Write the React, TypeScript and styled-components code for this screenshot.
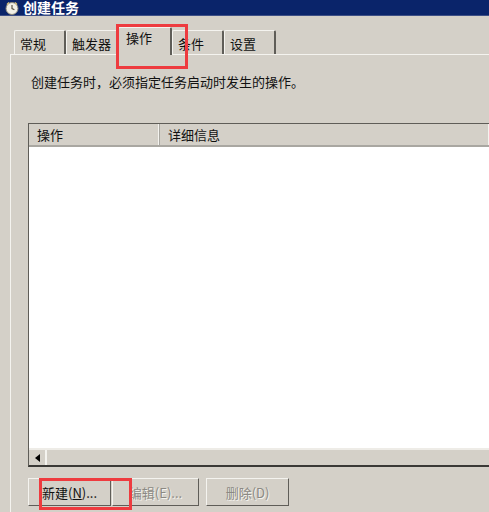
import React from 'react';
import styled, {createGlobalStyle} from 'styled-components';

const Global = createGlobalStyle`
  html, body {
    margin: 0;
    padding: 0;
    width: 489px;
    height: 512px;
    overflow: hidden;
    background: #d4d0c8;
  }
`

const tabs = [
    {label: '常规', width: 52},
    {label: '触发器', width: 52},
    {label: '操作', width: 54, active: true},
    {label: '条件', width: 52},
    {label: '设置', width: 52},
]

export default function App() {
    return (
        <Dialog>
            <Global/>
            <TitleBar>
                <svg width="14" height="14" viewBox="0 0 14 14">
                    <circle cx="7" cy="7.5" r="6" fill="#f1efe6" stroke="#8d8a7c"/>
                    <path d="M7 4v3.6l2.4 1.2" fill="none" stroke="#5a5548" strokeWidth="1.2"/>
                    <path d="M2 3.5 4 1.5M12 3.5 10 1.5" stroke="#d9c27a" strokeWidth="1.4"/>
                </svg>
                <span>创建任务</span>
            </TitleBar>
            <TabStrip>
                {tabs.map(t => (
                    <Tab key={t.label} $width={t.width} $active={t.active}>{t.label}</Tab>
                ))}
            </TabStrip>
            <Panel>
                <Hint>创建任务时，必须指定任务启动时发生的操作。</Hint>
                <ListBox>
                    <ListHeader>
                        <HeaderCell $width={131}>操作</HeaderCell>
                        <HeaderCell $width={330}>详细信息</HeaderCell>
                    </ListHeader>
                    <ListBody/>
                    <ScrollBar>
                        <ScrollButton>
                            <svg width="5" height="8" viewBox="0 0 5 8"><path d="M5 0v8L0 4z" fill="#000"/></svg>
                        </ScrollButton>
                    </ScrollBar>
                </ListBox>
                <ButtonRow>
                    <ActionButton $width={83} $gap={1}>新建(<u>N</u>)...</ActionButton>
                    <ActionButton $width={87} $gap={7} disabled>编辑(E)...</ActionButton>
                    <ActionButton $width={83} disabled>删除(D)</ActionButton>
                </ButtonRow>
            </Panel>
            <Mark $left={116} $top={24} $width={72} $height={45}/>
            <Mark $left={39} $top={478} $width={93} $height={32}/>
        </Dialog>
    )
}

const Dialog = styled.div`
  position: relative;
  width: 489px;
  height: 512px;
  overflow: hidden;
  background: #d4d0c8;
  color: #111;
  font-family: "Noto Sans CJK SC", "Liberation Sans", sans-serif;
  font-size: 13px;
`

const TitleBar = styled.div`
  display: flex;
  align-items: center;
  gap: 4px;
  height: 15px;
  padding-left: 5px;
  background: #0a246a;
  border-bottom: 1px solid #3d4f86;
  color: #fff;
  font-size: 14px;
  font-weight: 700;
  line-height: 15px;
`

const TabStrip = styled.div`
  display: flex;
  align-items: flex-end;
  height: 38px;
  padding-left: 14px;
`

const Tab = styled.div<{$width: number; $active?: boolean}>`
  box-sizing: border-box;
  width: ${p => p.$width}px;
  height: ${p => (p.$active ? 28 : 24)}px;
  padding: ${p => (p.$active ? '1px 0 0 7px' : '4px 0 0 5px')};
  background: #d4d0c8;
  border-top: 1px solid #f4f3ef;
  border-left: 1px solid #f4f3ef;
  border-right: 2px solid #5f5d58;
  border-radius: 2px 2px 0 0;
  line-height: 18px;
  white-space: nowrap;
  ${p => p.$active && 'margin-bottom: -1px; z-index: 1;'}
`

const Panel = styled.div`
  box-sizing: border-box;
  height: 460px;
  margin-left: 10px;
  padding: 18px 0 0 17px;
  border-top: 1px solid #f4f3ef;
  border-left: 1px solid #f4f3ef;
`

const Hint = styled.div`
  height: 18px;
  margin-left: 3px;
  line-height: 18px;
`

const ListBox = styled.div`
  display: flex;
  flex-direction: column;
  box-sizing: border-box;
  width: 480px;
  height: 344px;
  margin-top: 32px;
  border-top: 1px solid #5f5d58;
  border-left: 1px solid #5f5d58;
  border-bottom: 2px solid #3a3936;
`

const ListHeader = styled.div`
  display: flex;
  height: 21px;
  border-bottom: 2px solid #a9a7a1;
`

const HeaderCell = styled.div<{$width: number}>`
  box-sizing: border-box;
  width: ${p => p.$width}px;
  padding-left: 8px;
  border-right: 1px solid #a9a7a1;
  box-shadow: inset -1px 0 0 #f4f3ef;
  line-height: 21px;
`

const ListBody = styled.div`
  flex: 1;
  background: #fff;
`

const ScrollBar = styled.div`
  display: flex;
  height: 15px;
  border-top: 2px solid #eeece7;
`

const ScrollButton = styled.div`
  display: flex;
  align-items: center;
  justify-content: center;
  box-sizing: border-box;
  width: 18px;
  border-right: 2px solid #f4f3ef;
`

const ButtonRow = styled.div`
  display: flex;
  margin-top: 11px;
`

const ActionButton = styled.button<{$width: number; $gap?: number}>`
  box-sizing: border-box;
  width: ${p => p.$width}px;
  height: 28px;
  margin-right: ${p => p.$gap ?? 0}px;
  padding: 0;
  background: #d4d0c8;
  border: 1px solid;
  border-color: #f4f3ef #5f5d58 #5f5d58 #f4f3ef;
  color: #111;
  font: inherit;
  text-align: center;
  white-space: nowrap;
  &:disabled {
    color: #8b8983;
    text-shadow: 1px 1px 0 #f4f3ef;
  }
`

const Mark = styled.div<{$left: number; $top: number; $width: number; $height: number}>`
  position: absolute;
  left: ${p => p.$left}px;
  top: ${p => p.$top}px;
  box-sizing: border-box;
  width: ${p => p.$width}px;
  height: ${p => p.$height}px;
  border: 3px solid #ee3b3f;
  z-index: 2;
`
